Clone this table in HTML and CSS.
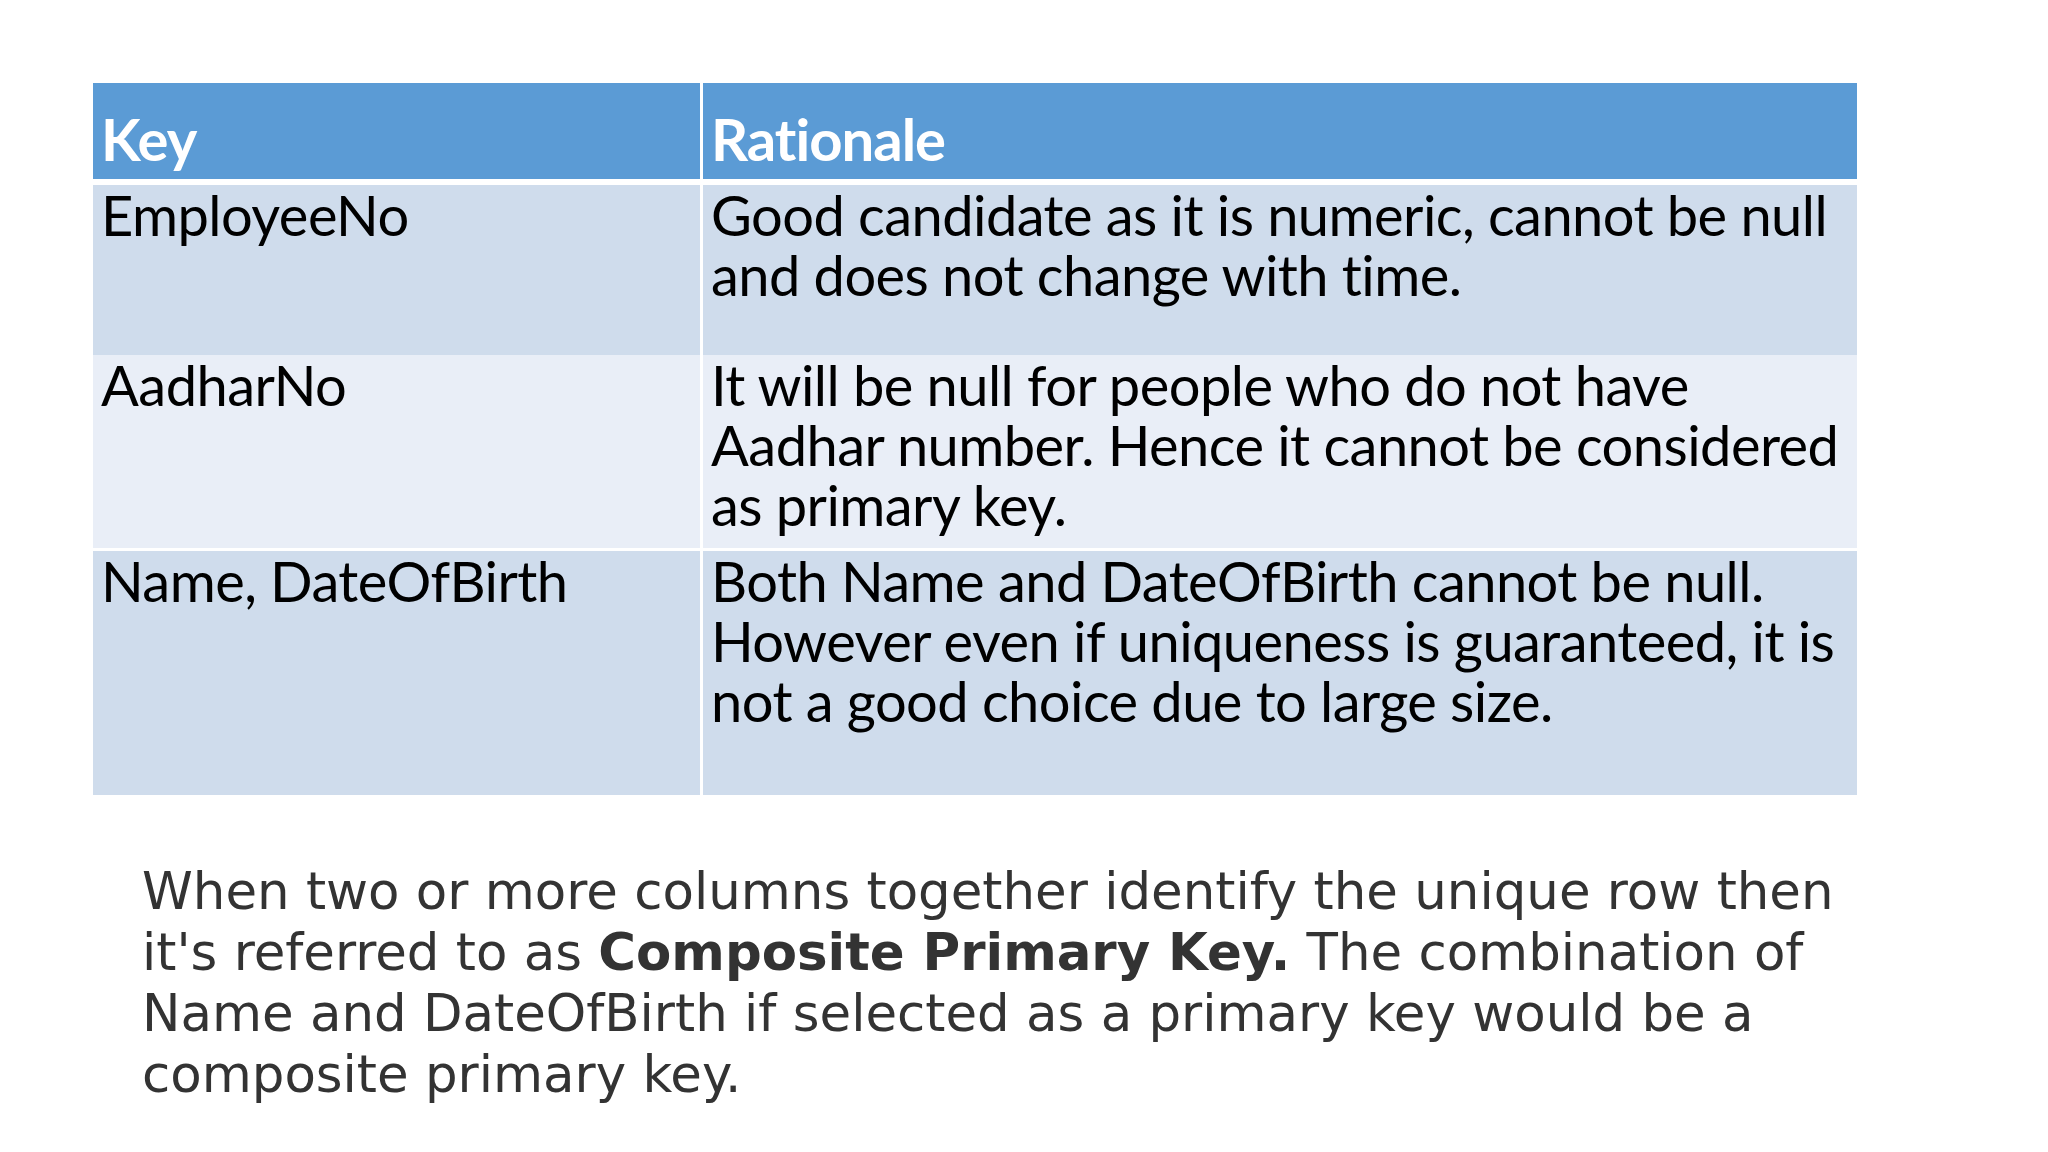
FILE: index.html
```html
<!DOCTYPE html>
<html>
<head>
<meta charset="utf-8">
<link rel="stylesheet" href="styles.css">
</head>
<body>
<main class="slide">
  <div class="keys">
    <div class="cell head">Key</div>
    <div class="cell head">Rationale</div>

    <div class="cell band1 r1">EmployeeNo</div>
    <div class="cell band1 r1">Good candidate as it is numeric, cannot be null<br>and does not change with time.</div>

    <div class="cell band2 r2">AadharNo</div>
    <div class="cell band2 r2">It will be null for people who do not have<br>Aadhar number. Hence it cannot be considered<br>as primary key.</div>

    <div class="cell band1 r3">Name, DateOfBirth</div>
    <div class="cell band1 r3">Both Name and DateOfBirth cannot be null.<br>However even if uniqueness is guaranteed, it is<br>not a good choice due to large size.</div>
  </div>

  <p class="note">When two or more columns together identify the unique row then<br>it's referred to as <strong>Composite Primary Key.</strong> The combination of<br>Name and DateOfBirth if selected as a primary key would be a<br>composite primary key.</p>
</main>
</body>
</html>
```

FILE: styles.css
```css
html, body {
  margin: 0;
  padding: 0;
  background: #ffffff;
}

.slide {
  width: 2048px;
  height: 1152px;
  box-sizing: border-box;
  padding: 83px 0 0 93px;
  display: flex;
  flex-direction: column;
}

.keys {
  display: grid;
  grid-template-columns: 607px 1154px;
  grid-template-rows: 96px 170px 193px 244px;
  column-gap: 3px;
  row-gap: 3px;
  width: 1764px;
  font-family: "Lato", "Liberation Sans", sans-serif;
  color: #000000;
}

.cell {
  box-sizing: border-box;
  padding: 0 8px 0 8px;
  font-size: 56px;
  line-height: 60px;
  white-space: nowrap;
  letter-spacing: -0.55px;
}

.head {
  background: #5b9bd5;
  color: #ffffff;
  font-weight: 700;
  font-size: 58px;
  line-height: 64px;
  padding-top: 24px;
  padding-left: 8px;
  letter-spacing: -1px;
  margin-bottom: 3px;
  height: 96px;
}

.band1 {
  background: #cfdcec;
}

.band2 {
  background: #e9eef7;
}

.r1 {
  margin-top: 3px;
  height: 170px;
}

.note {
  margin: 66px 0 0 49px;
  font-family: "DejaVu Sans", Verdana, sans-serif;
  font-size: 51.4px;
  line-height: 61px;
  color: #333333;
  white-space: nowrap;
}

.note strong {
  font-weight: 700;
}
```
